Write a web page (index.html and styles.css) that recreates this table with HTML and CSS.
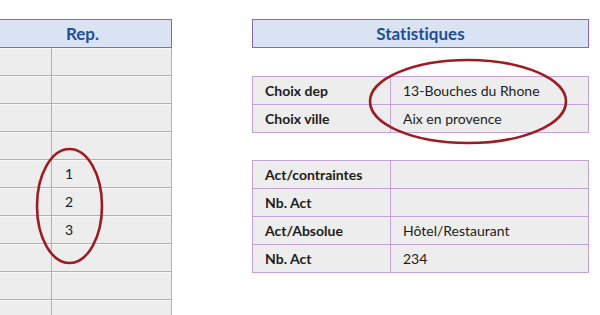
FILE: index.html
```html
<!DOCTYPE html>
<html>
<head>
<meta charset="utf-8">
<link rel="stylesheet" href="styles.css">
</head>
<body>
<div class="page">
  <section class="rep">
    <div class="head">Rep.</div>
    <div class="grid">
      <div class="c"></div><div class="c"></div>
      <div class="c"></div><div class="c"></div>
      <div class="c"></div><div class="c"></div>
      <div class="c"></div><div class="c"></div>
      <div class="c"></div><div class="c num">1</div>
      <div class="c"></div><div class="c num">2</div>
      <div class="c"></div><div class="c num">3</div>
      <div class="c"></div><div class="c"></div>
      <div class="c"></div><div class="c"></div>
      <div class="c"></div><div class="c"></div>
    </div>
  </section>
  <section class="stats">
    <div class="head">Statistiques</div>
    <div class="tbl t1">
      <div class="lab">Choix dep</div><div class="val">13-Bouches du Rhone</div>
      <div class="lab">Choix ville</div><div class="val">Aix en provence</div>
    </div>
    <div class="tbl t2">
      <div class="lab">Act/contraintes</div><div class="val"></div>
      <div class="lab">Nb. Act</div><div class="val"></div>
      <div class="lab">Act/Absolue</div><div class="val">Hôtel/Restaurant</div>
      <div class="lab">Nb. Act</div><div class="val">234</div>
    </div>
  </section>
  <svg class="marks" width="600" height="315" viewBox="0 0 600 315">
    <ellipse cx="69.5" cy="206" rx="32.5" ry="57" fill="none" stroke="#9c1c22" stroke-width="2.6"/>
    <ellipse cx="468" cy="101.5" rx="98" ry="41.5" fill="none" stroke="#9c1c22" stroke-width="2.6"/>
  </svg>
</div>
</body>
</html>
```
FILE: styles.css
```css
html, body { margin: 0; padding: 0; background: #fff; }
body {
  font-family: Lato, "Open Sans", sans-serif;
  color: #1c1c1c;
  font-variant-ligatures: none;
}
.page {
  position: relative;
  width: 600px;
  height: 315px;
  overflow: hidden;
  display: flex;
  align-items: flex-start;
  gap: 80px;
}
.head {
  height: 27px;
  box-sizing: content-box;
  background: #dae3f3;
  border: 1.5px solid #8f63bb;
  color: #1f4e99;
  font-weight: bold;
  font-size: 17px;
  display: flex;
  align-items: center;
  justify-content: center;
}
.rep { width: 178px; margin-top: 19px; margin-left: -6px; }
.rep .head { border-left: none; }
.grid {
  display: grid;
  grid-template-columns: 58px 1fr;
  border-right: 1px solid #c3a2dc;
}
.grid .c {
  height: 27px;
  background: #ededed;
  border-bottom: 1px solid #c3a2dc;
  box-shadow: inset 0 1px 0 #fafafa;
  font-size: 14px;
  display: flex;
  align-items: center;
}
.grid .c:nth-child(odd) { border-right: 1px solid #c3a2dc; }
.grid .num { padding-left: 13px; }
.stats { width: 337px; margin-top: 19px; }
.tbl {
  display: grid;
  grid-template-columns: 138px 1fr;
  border: 1px solid #c3a2dc;
  border-bottom: none;
  background: #ededed;
}
.t1 { margin-top: 28px; }
.t2 { margin-top: 27px; }
.lab, .val {
  height: 27px;
  border-bottom: 1px solid #c3a2dc;
  display: flex;
  align-items: center;
  padding-left: 12px;
  font-size: 14px;
}
.lab { font-weight: bold; border-right: 1px solid #c3a2dc; }
.marks { position: absolute; left: 0; top: 0; pointer-events: none; }
```
